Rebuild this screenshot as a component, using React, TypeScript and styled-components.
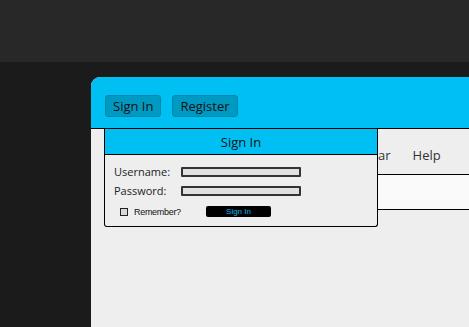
import React from "react";
import styled, { createGlobalStyle } from "styled-components";

const GlobalStyle = createGlobalStyle`
	html, body, #root {
		margin: 0;
		padding: 0;
		height: 100%;
	}
	body {
		background: #1b1b1b;
		font-family: "Open Sans", "Noto Sans", sans-serif;
		overflow: hidden;
	}
`;

const menuItems = ["File", "Edit", "View", "Calendar", "Help"];

export default function App() {
	return (
		<>
			<GlobalStyle />
			<Page>
				<TopBar />
				<Stage>
					<Window>
						<Header>
							<HeaderButton>Sign In</HeaderButton>
							<HeaderButton>Register</HeaderButton>
						</Header>
						<Content>
							<MenuBar>
								{menuItems.map((item) => (
									<MenuItem key={item}>{item}</MenuItem>
								))}
							</MenuBar>
							<Field />
						</Content>
						<Dropdown>
							<DropdownTitle>Sign In</DropdownTitle>
							<Form>
								<FieldRow>
									<Label>Username:</Label>
									<Input />
								</FieldRow>
								<FieldRow>
									<Label>Password:</Label>
									<Input type="password" />
								</FieldRow>
								<ActionRow>
									<CheckLabel>
										<CheckBox />
										Remember?
									</CheckLabel>
									<SubmitButton>Sign In</SubmitButton>
								</ActionRow>
							</Form>
						</Dropdown>
					</Window>
				</Stage>
			</Page>
		</>
	);
}

const Page = styled.div`
	display: flex;
	flex-direction: column;
	height: 100vh;
`;

const TopBar = styled.div`
	height: 62px;
	background: #282828;
	flex-shrink: 0;
`;

const Stage = styled.div`
	flex: 1;
	display: flex;
	padding: 15px 0 0 91px;
	background: #1b1b1b;
`;

const Window = styled.div`
	position: relative;
	flex: 1;
	display: flex;
	flex-direction: column;
	background: #eeeeee;
	border-radius: 9px 0 0 0;
	overflow: hidden;
`;

const Header = styled.div`
	height: 52px;
	box-sizing: border-box;
	display: flex;
	align-items: flex-start;
	gap: 11px;
	padding: 18px 14px 0;
	background: #00bff3;
	border-bottom: 1px solid #000;
`;

const HeaderButton = styled.button`
	height: 22px;
	padding: 0 7px;
	background: #0099c2;
	border: 1px solid #0089ad;
	border-radius: 3px;
	color: #111;
	font-family: "Open Sans", "Noto Sans", sans-serif;
	font-size: 13px;
	line-height: 20px;
`;

const Content = styled.div`
	display: flex;
	flex-direction: column;
	padding-left: 13px;
`;

const MenuBar = styled.div`
	height: 46px;
	box-sizing: border-box;
	display: flex;
	align-items: center;
	gap: 22px;
	padding: 6px 0 0 94px;
	border-bottom: 1px solid #000;
`;

const MenuItem = styled.span`
	font-size: 13px;
	color: #333;
`;

const Field = styled.div`
	height: 34px;
	background: #fafafa;
	border-bottom: 1px solid #000;
`;

const Dropdown = styled.div`
	position: absolute;
	left: 13px;
	top: 52px;
	width: 274px;
	box-sizing: border-box;
	background: #eeeeee;
	border: 1px solid #000;
	border-top: none;
	border-radius: 0 0 3px 3px;
`;

const DropdownTitle = styled.div`
	height: 26px;
	box-sizing: border-box;
	display: flex;
	align-items: center;
	justify-content: center;
	background: #00bff3;
	border-bottom: 1px solid #000;
	font-size: 13px;
	color: #111;
`;

const Form = styled.div`
	display: flex;
	flex-direction: column;
	padding: 7px 0 9px 9px;
`;

const FieldRow = styled.div`
	display: flex;
	align-items: center;
	height: 19px;
`;

const Label = styled.span`
	width: 67px;
	font-size: 11px;
	color: #222;
`;

const Input = styled.input`
	width: 120px;
	height: 10px;
	box-sizing: border-box;
	margin: 0;
	padding: 0;
	background: #e0e0e0;
	border: 2px solid #333;
	border-radius: 1px;
`;

const ActionRow = styled.div`
	display: flex;
	align-items: center;
	height: 11px;
	margin-top: 6px;
	padding-left: 6px;
`;

const CheckLabel = styled.label`
	display: flex;
	align-items: center;
	gap: 6px;
	width: 86px;
	font-family: "Liberation Sans Narrow", "Liberation Sans", sans-serif;
	font-size: 9px;
	letter-spacing: -0.3px;
	color: #111;
`;

const CheckBox = styled.span`
	width: 8px;
	height: 8px;
	box-sizing: border-box;
	background: #d8d8d8;
	border: 1px solid #222;
`;

const SubmitButton = styled.button`
	width: 65px;
	height: 11px;
	padding: 0;
	background: #000;
	border: none;
	border-radius: 2px;
	color: #00bff3;
	font-family: "Liberation Sans Narrow", "Liberation Sans", sans-serif;
	font-size: 8px;
	line-height: 11px;
`;
